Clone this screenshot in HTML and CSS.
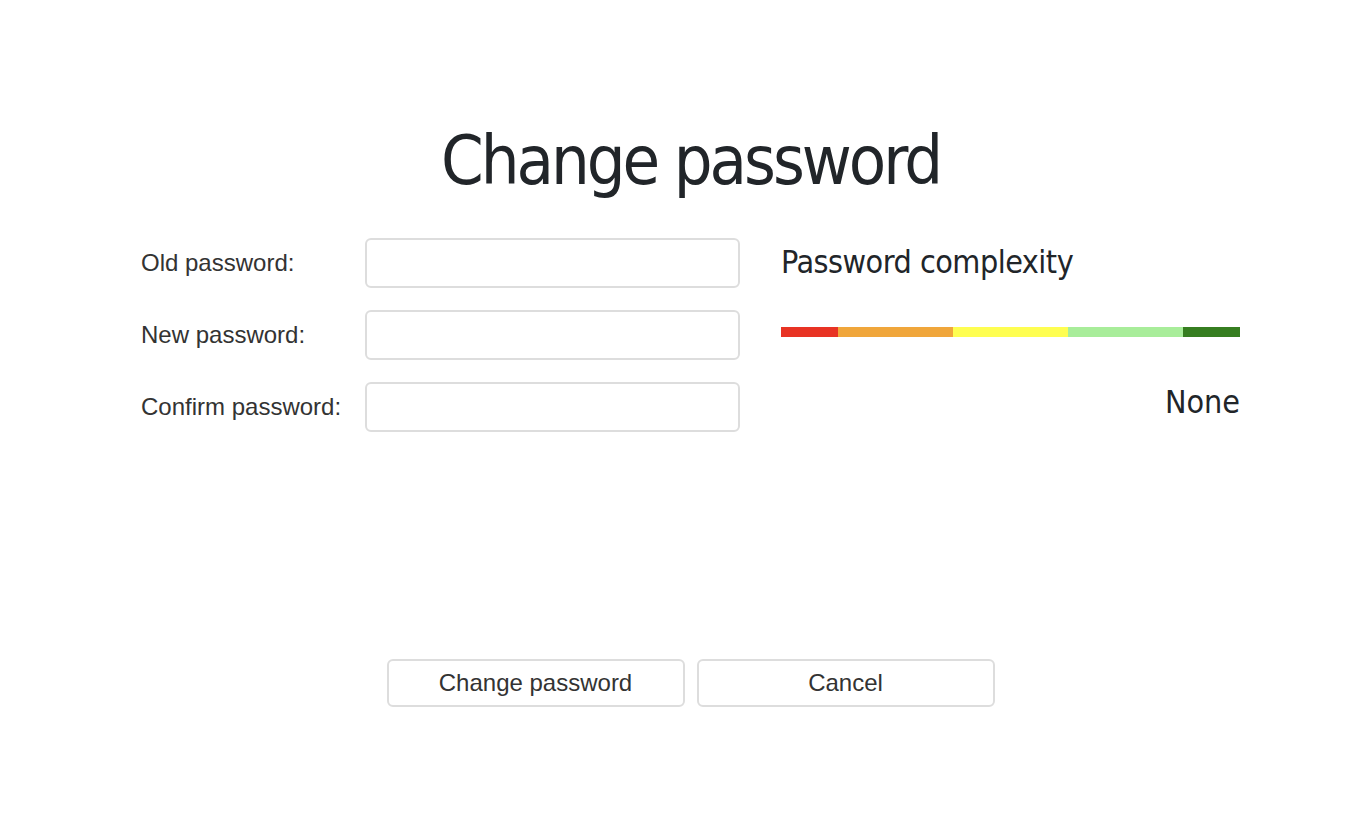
FILE: index.html
```html
<!DOCTYPE html>
<html lang="en">
<head>
<meta charset="utf-8">
<title>Change password</title>
<link rel="stylesheet" href="styles.css">
</head>
<body>
<div class="page">
  <h1 class="title">Change password</h1>
  <div class="content">
    <form class="fields">
      <div class="row">
        <label class="label" for="old">Old password:</label>
        <input class="input" id="old" type="password">
      </div>
      <div class="row">
        <label class="label" for="new">New password:</label>
        <input class="input" id="new" type="password">
      </div>
      <div class="row">
        <label class="label" for="confirm">Confirm password:</label>
        <input class="input" id="confirm" type="password">
      </div>
    </form>
    <div class="complexity">
      <div class="complexity-title">Password complexity</div>
      <div class="meter">
        <span class="seg seg-1"></span>
        <span class="seg seg-2"></span>
        <span class="seg seg-3"></span>
        <span class="seg seg-4"></span>
        <span class="seg seg-5"></span>
      </div>
      <div class="complexity-value">None</div>
    </div>
  </div>
  <div class="actions">
    <button class="btn" type="button">Change password</button>
    <button class="btn" type="button">Cancel</button>
  </div>
</div>
</body>
</html>
```

FILE: styles.css
```css
html, body {
  margin: 0;
  padding: 0;
  background: #ffffff;
}

body {
  font-family: "Liberation Sans", Arial, sans-serif;
  color: #333333;
}

.page {
  width: 1099px;
  margin-left: 141px;
  padding-top: 119px;
}

.title {
  margin: 0;
  text-align: center;
  font-family: "DejaVu Sans", sans-serif;
  font-stretch: condensed;
  font-weight: normal;
  font-size: 68px;
  letter-spacing: -3px;
  line-height: 84px;
  color: #212529;
}

.content {
  display: flex;
  gap: 41px;
  margin-top: 35px;
}

.fields {
  display: flex;
  flex-direction: column;
  gap: 22px;
  margin: 0;
}

.row {
  display: flex;
  align-items: center;
}

.label {
  width: 224px;
  font-size: 24px;
  color: #333333;
}

.input {
  box-sizing: border-box;
  width: 375px;
  height: 50px;
  border: 2px solid #dddddd;
  border-radius: 6px;
  background: #ffffff;
  padding: 0 10px;
  font-size: 20px;
  outline: none;
}

.complexity {
  width: 460px;
  display: flex;
  flex-direction: column;
}

.complexity-title {
  font-family: "DejaVu Sans", sans-serif;
  font-stretch: condensed;
  font-size: 32px;
  letter-spacing: -0.5px;
  line-height: 48px;
  color: #212529;
}

.meter {
  display: flex;
  height: 10px;
  margin-top: 41px;
}

.seg { display: block; height: 100%; }
.seg-1 { flex: 1; background: #e83324; }
.seg-2 { flex: 2; background: #f0a63b; }
.seg-3 { flex: 2; background: #fefe51; }
.seg-4 { flex: 2; background: #a8ed9a; }
.seg-5 { flex: 1; background: #367e20; }

.complexity-value {
  margin-top: 41px;
  text-align: right;
  font-family: "DejaVu Sans", sans-serif;
  font-stretch: condensed;
  font-size: 32px;
  line-height: 48px;
  color: #212529;
}

.actions {
  display: flex;
  justify-content: center;
  gap: 12px;
  margin-top: 227px;
}

.btn {
  box-sizing: border-box;
  width: 298px;
  height: 48px;
  border: 2px solid #dddddd;
  border-radius: 6px;
  background: #ffffff;
  font-family: "Liberation Sans", Arial, sans-serif;
  font-size: 24px;
  color: #333333;
  cursor: pointer;
}
```
